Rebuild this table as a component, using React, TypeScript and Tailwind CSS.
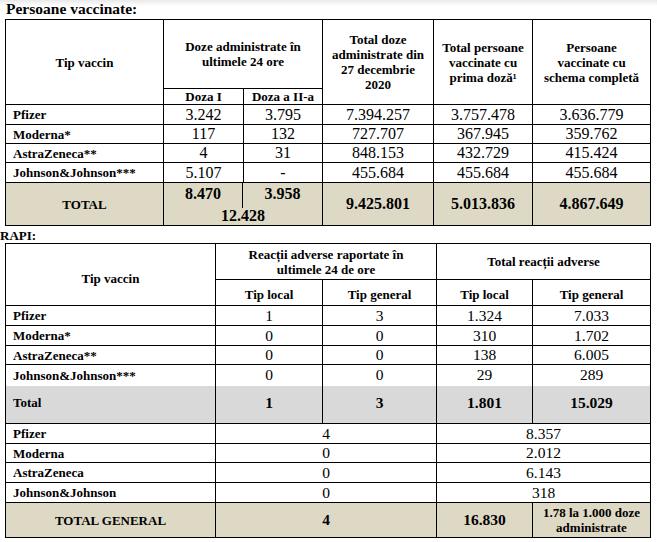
import React from "react";

const bd = "border border-black";
const hdr = `${bd} font-bold text-[13px] leading-[15px] text-center align-middle`;
const lbl = `${bd} font-bold text-[13px] leading-[15px] text-left align-middle pl-[7px] whitespace-nowrap`;
const num1 = `${bd} text-[16px] leading-[16px] text-center align-middle`;
const num2 = `${bd} text-[15.5px] leading-[16px] text-center align-middle`;

export default function App() {
  const t1 = [
    ["Pfizer", "3.242", "3.795", "7.394.257", "3.757.478", "3.636.779", "h-[20px]"],
    ["Moderna*", "117", "132", "727.707", "367.945", "359.762", "h-[19px]"],
    ["AstraZeneca**", "4", "31", "848.153", "432.729", "415.424", "h-[19px]"],
    ["Johnson&Johnson***", "5.107", "-", "455.684", "455.684", "455.684", "h-[20px]"],
  ];
  const t2 = [
    ["Pfizer", "1", "3", "1.324", "7.033", "h-[20px]"],
    ["Moderna*", "0", "0", "310", "1.702", "h-[20px]"],
    ["AstraZeneca**", "0", "0", "138", "6.005", "h-[19px]"],
    ["Johnson&Johnson***", "0", "0", "29", "289", "h-[21px]"],
  ];
  const t3 = [
    ["Pfizer", "4", "8.357", "h-[20px]"],
    ["Moderna", "0", "2.012", "h-[19px]"],
    ["AstraZeneca", "0", "6.143", "h-[20px]"],
    ["Johnson&Johnson", "0", "318", "h-[20px]"],
  ];
  return (
    <div className="w-[657px] h-[542px] bg-white text-black [font-family:'Liberation_Serif','Times_New_Roman',serif] overflow-hidden bg-[linear-gradient(to_bottom,#e9e9e9_0px,#ffffff_6px)]">
      <div className="h-[19px] pl-[6px] text-[15.5px] leading-[17px] font-bold">Persoane vaccinate:</div>
      <table className="ml-[5px] w-[645px] table-fixed border-collapse">
        <colgroup>
          <col className="w-[158px]" />
          <col className="w-[80px]" />
          <col className="w-[79px]" />
          <col className="w-[111px]" />
          <col className="w-[99px]" />
          <col className="w-[118px]" />
        </colgroup>
        <tbody>
          <tr className="h-[69px]">
            <th rowSpan={2} className={hdr}>Tip vaccin</th>
            <th colSpan={2} className={hdr}>
              Doze administrate în
              <br />
              ultimele 24 ore
            </th>
            <th rowSpan={2} className={hdr}>
              Total doze
              <br />
              administrate din
              <br />
              27 decembrie
              <br />
              2020
            </th>
            <th rowSpan={2} className={hdr}>
              Total persoane
              <br />
              vaccinate cu
              <br />
              prima doză¹
            </th>
            <th rowSpan={2} className={hdr}>
              Persoane
              <br />
              vaccinate cu
              <br />
              schema completă
            </th>
          </tr>
          <tr className="h-[16px]">
            <th className={`${hdr} leading-[14px]`}>Doza I</th>
            <th className={`${hdr} leading-[14px]`}>Doza a II-a</th>
          </tr>
          {t1.map((r) => (
            <tr key={r[0]} className={r[6]}>
              <td className={lbl}>{r[0]}</td>
              <td className={num1}>{r[1]}</td>
              <td className={num1}>{r[2]}</td>
              <td className={num1}>{r[3]}</td>
              <td className={num1}>{r[4]}</td>
              <td className={num1}>{r[5]}</td>
            </tr>
          ))}
          <tr className="h-[43px] bg-[#ddd9c4]">
            <td className={hdr}>TOTAL</td>
            <td colSpan={2} className={`${bd} align-top p-0`}>
              <div className="flex h-[25px]">
                <div className="w-[79px] border-r border-black text-center font-bold text-[16px] leading-[16px] pt-[3px]">8.470</div>
                <div className="flex-1 text-center font-bold text-[16px] leading-[16px] pt-[3px]">3.958</div>
              </div>
              <div className="text-center font-bold text-[16px] leading-[16px]">12.428</div>
            </td>
            <td className={`${num1} font-bold`}>9.425.801</td>
            <td className={`${num1} font-bold`}>5.013.836</td>
            <td className={`${num1} font-bold`}>4.867.649</td>
          </tr>
        </tbody>
      </table>
      <div className="h-[17px] pt-[3px] text-[13px] leading-[14px] font-bold">RAPI:</div>
      <table className="ml-[5px] w-[645px] table-fixed border-collapse">
        <colgroup>
          <col className="w-[210px]" />
          <col className="w-[107px]" />
          <col className="w-[114px]" />
          <col className="w-[96px]" />
          <col className="w-[118px]" />
        </colgroup>
        <tbody>
          <tr className="h-[36px]">
            <th rowSpan={2} className={`${hdr} pt-[8px]`}>Tip vaccin</th>
            <th colSpan={2} className={hdr}>
              Reacții adverse raportate în
              <br />
              ultimele 24 de ore
            </th>
            <th colSpan={2} className={hdr}>Total reacții adverse</th>
          </tr>
          <tr className="h-[26px]">
            <th className={`${hdr} pt-[3px]`}>Tip local</th>
            <th className={`${hdr} pt-[3px]`}>Tip general</th>
            <th className={`${hdr} pt-[3px]`}>Tip local</th>
            <th className={`${hdr} pt-[3px]`}>Tip general</th>
          </tr>
          {t2.map((r) => (
            <tr key={r[0]} className={r[5]}>
              <td className={lbl}>{r[0]}</td>
              <td className={num2}>{r[1]}</td>
              <td className={num2}>{r[2]}</td>
              <td className={num2}>{r[3]}</td>
              <td className={num2}>{r[4]}</td>
            </tr>
          ))}
          <tr className="h-[38px] bg-[#d9d9d9]">
            <td className={`${lbl} [border-top-style:hidden] align-bottom pb-[4px]`}>Total</td>
            <td className={`${num2} [border-top-style:hidden] font-bold align-top pt-[9px]`}>1</td>
            <td className={`${num2} [border-top-style:hidden] font-bold align-top pt-[9px]`}>3</td>
            <td className={`${num2} [border-top-style:hidden] font-bold align-top pt-[9px]`}>1.801</td>
            <td className={`${num2} [border-top-style:hidden] font-bold align-top pt-[9px]`}>15.029</td>
          </tr>
          {t3.map((r) => (
            <tr key={r[0] + "b"} className={r[3]}>
              <td className={lbl}>{r[0]}</td>
              <td colSpan={2} className={num2}>{r[1]}</td>
              <td colSpan={2} className={num2}>{r[2]}</td>
            </tr>
          ))}
          <tr className="h-[35px] bg-[#ddd9c4]">
            <td className={hdr}>TOTAL GENERAL</td>
            <td colSpan={2} className={`${num2} font-bold`}>4</td>
            <td className={`${num2} font-bold`}>16.830</td>
            <td className={`${hdr} leading-[15px]`}>
              1.78 la 1.000 doze
              <br />
              administrate
            </td>
          </tr>
        </tbody>
      </table>
    </div>
  );
}
